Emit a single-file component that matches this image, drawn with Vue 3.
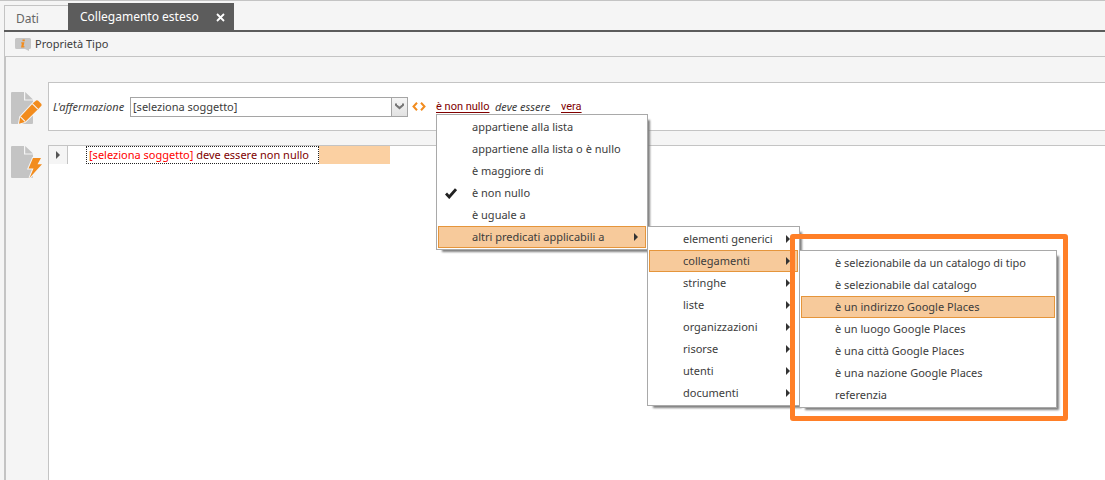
<script setup>
const predicates = [
  { label: 'appartiene alla lista' },
  { label: 'appartiene alla lista o è nullo' },
  { label: 'è maggiore di' },
  { label: 'è non nullo', checked: true },
  { label: 'è uguale a' },
]
const categories = ['elementi generici', 'collegamenti', 'stringhe', 'liste', 'organizzazioni', 'risorse', 'utenti', 'documenti']
const links = [
  'è selezionabile da un catalogo di tipo',
  'è selezionabile dal catalogo',
  'è un indirizzo Google Places',
  'è un luogo Google Places',
  'è una città Google Places',
  'è una nazione Google Places',
  'referenzia',
]
const openCategory = 'collegamenti'
const activeLink = 'è un indirizzo Google Places'
</script>

<template>
  <div class="app">
    <nav class="tabs">
      <button class="tab" type="button">Dati</button>
      <div class="tab active">
        <button class="tab-name" type="button">Collegamento esteso</button>
        <button class="close" type="button" aria-label="Chiudi">
          <svg width="9" height="9" viewBox="0 0 9 9"><path d="M1 1l7 7M8 1l-7 7" stroke="#fff" stroke-width="1.800" /></svg>
        </button>
      </div>
    </nav>

    <main class="page">
      <div class="toolbar">
        <button class="tool" type="button">
          <svg width="16" height="13" viewBox="0 0 16 13">
            <path d="M1.500 0h13A1.500 1.500 0 0 1 16 1.500v8a1.500 1.500 0 0 1-1.500 1.500H14v2l-4-2H1.500A1.500 1.500 0 0 1 0 9.500v-8A1.500 1.500 0 0 1 1.500 0z" fill="#c6c6c6" />
            <path d="M7.600 1.500h2.200v1.800H7.400zM6.300 4.300h3.100l-.9 4h1l-.2 1.300H6l.9-4h-.8z" fill="#f28c1e" />
          </svg>
          Proprietà Tipo
        </button>
      </div>

      <div class="content">
        <section class="row">
          <svg class="doc" width="32" height="34" viewBox="0 0 32 34">
            <path d="M1 1h12v8.500h9V32a1 1 0 0 1-1 1H1a1 1 0 0 1-1-1V2a1 1 0 0 1 1-1zM14.200 1L22 8.500h-7.800z" fill="#c4c4c4" />
            <g fill="#f28c1e" stroke="#f5f5f5" stroke-width="2" paint-order="stroke">
              <path d="M22.700 11.500l2.500-2q1-.5 2 .3l3 3q.8 1 .2 2l-2.400 2.400L14 30.900 8 32.800l1.200-6.900z" />
              <path d="M21.300 12.700l5.500 5.500M9.300 25.700l5 5" stroke-width="1.100" />
            </g>
          </svg>
          <div class="panel statement">
            <label class="lead" for="subject">L'affermazione</label>
            <div class="picker">
              <select id="subject"><option>[seleziona soggetto]</option></select>
              <span class="caret">
                <svg width="9" height="7" viewBox="0 0 9 7"><path d="M1 0.500v1.600l3.500 3 3.500-3V.5" fill="none" stroke="#757575" stroke-width="2" /></svg>
              </span>
            </div>
            <svg class="code" width="14" height="9" viewBox="0 0 14 9"><path d="M5 .7L1.500 4.500 5 8.300M9 .7l3.500 3.800L9 8.300" fill="none" stroke="#f28c1e" stroke-width="2" /></svg>
            <div class="predicate">
              <button class="term" type="button">è non nullo</button>
              <ul class="menu main">
                <li v-for="p in predicates" :key="p.label">
                  <button class="item" type="button">
                    <svg v-if="p.checked" class="check" width="12" height="11" viewBox="0 0 12 11"><path d="M1 5.500l3.200 3.500L11 1.200" fill="none" stroke="#222" stroke-width="2.800" /></svg>
                    {{ p.label }}
                  </button>
                </li>
                <li>
                  <button class="item on" type="button">altri predicati applicabili a<span class="arrow"></span></button>
                  <ul class="menu sub categories">
                    <li v-for="c in categories" :key="c">
                      <button class="item" :class="{ on: c === openCategory }" type="button">{{ c }}<span class="arrow"></span></button>
                      <div v-if="c === openCategory" class="sub framed">
                        <ul class="menu links">
                          <li v-for="l in links" :key="l">
                            <button class="item" :class="{ on: l === activeLink }" type="button">{{ l }}</button>
                          </li>
                        </ul>
                      </div>
                    </li>
                  </ul>
                </li>
              </ul>
            </div>
            <em class="verb">deve essere</em>
            <button class="term" type="button">vera</button>
          </div>
        </section>

        <section class="row rules">
          <svg class="doc" width="32" height="34" viewBox="0 0 32 34">
            <path d="M1 1h12v8.500h9V32a1 1 0 0 1-1 1H1a1 1 0 0 1-1-1V2a1 1 0 0 1 1-1zM14.200 1L22 8.500h-7.800z" fill="#c4c4c4" />
            <path d="M22 13h8l-3.500 6.300H31L18.500 33l4-9.500h-5z" fill="#f28c1e" stroke="#f5f5f5" stroke-width="2" paint-order="stroke" />
          </svg>
          <div class="panel list">
            <div class="rule">
              <button class="expand" type="button" aria-label="Espandi"><span class="arrow"></span></button>
              <p class="sentence"><span>[seleziona soggetto]</span> deve essere non nullo</p>
              <i class="swatch"></i>
            </div>
          </div>
        </section>
      </div>
    </main>
  </div>
</template>

<style>
body {
  background: #f5f5f5;
}
</style>

<style scoped>
.app {
  display: flex;
  flex-direction: column;
  height: 100vh;
  overflow: hidden;
  box-sizing: border-box;
  border-top: 1px solid #c4c4c4;
  background: #f5f5f5;
  color: #3c3c3c;
  font: 11px/16px "Noto Sans", "Open Sans", sans-serif;
}
button {
  border: 0;
  padding: 0;
  margin: 0;
  background: none;
  color: inherit;
  font: inherit;
  text-align: left;
}
svg {
  flex: none;
  display: block;
}
.tabs {
  display: flex;
  align-items: flex-end;
  margin-left: 4px;
  padding-top: 2px;
  border-bottom: 2px solid #5c5c5c;
}
.tab {
  height: 25px;
  width: 64px;
  box-sizing: border-box;
  padding: 1px 11px 0;
  border: 1px solid #c4c4c4;
  border-width: 1px 0 0 1px;
  color: #666;
  font-size: 12px;
}
.tab.active {
  display: flex;
  align-items: center;
  justify-content: space-between;
  width: 166px;
  height: 27px;
  padding: 1px 9px 0 12px;
  border: 0;
  background: #5c5c5c;
  color: #fff;
}
.page {
  flex: 1;
  display: flex;
  flex-direction: column;
  margin-left: 4px;
  border-left: 1px solid #c4c4c4;
}
.toolbar {
  height: 24px;
  display: flex;
  align-items: center;
  padding-left: 10px;
  border-bottom: 1px solid #c4c4c4;
}
.tool {
  display: flex;
  align-items: center;
  gap: 4px;
}
.content {
  flex: 1;
  display: flex;
  flex-direction: column;
  gap: 14px;
  padding: 25px 0 0 5px;
  border-left: 1px solid #c4c4c4;
}
.row {
  display: flex;
}
.rules {
  flex: 1;
}
.doc {
  width: 32px;
  margin: 9px 5px 0 0;
}
.rules .doc {
  margin-top: 0;
}
.panel {
  flex: 1;
  box-sizing: border-box;
  border: 1px solid #c4c4c4;
  border-right: 0;
  background: #fff;
}
.statement {
  display: flex;
  align-items: center;
  height: 49px;
  padding-left: 4px;
}
.list {
  border-bottom: 0;
}
.lead {
  width: 77px;
  font-style: italic;
  white-space: nowrap;
}
.picker {
  display: flex;
  position: relative;
  width: 278px;
  height: 20px;
  box-sizing: border-box;
  border: 1px solid #a5a5a5;
}
.picker select {
  appearance: none;
  width: 100%;
  margin: 0;
  padding: 0 20px 0 2px;
  border: 0;
  border-radius: 0;
  background: #fff;
  color: #3c3c3c;
  font: inherit;
}
.caret {
  position: absolute;
  top: 0;
  right: 0;
  bottom: 0;
  width: 15px;
  display: grid;
  place-items: center;
  border-left: 1px solid #a5a5a5;
  background: linear-gradient(#f5f5f5, #e2e2e2);
  pointer-events: none;
}
.code {
  margin: 0 10px 0 4px;
}
.predicate {
  position: relative;
  width: 59px;
}
.term {
  color: #800000;
  font-family: Roboto, "Noto Sans", sans-serif;
  text-decoration: underline;
  text-underline-offset: 2px;
  white-space: nowrap;
}
.verb {
  width: 66px;
  white-space: nowrap;
}
.menu {
  margin: 0;
  padding: 1px;
  list-style: none;
  box-sizing: border-box;
  border: 1px solid #a9a9a9;
  background: #fff;
  box-shadow: 4px 4px 2px -2px #808080;
}
.main {
  position: absolute;
  z-index: 2;
  top: calc(100% - 1px);
  left: 0;
  width: 212px;
}
.menu li {
  position: relative;
}
.sub {
  position: absolute;
  z-index: 3;
  top: 0;
  left: calc(100% + 1px);
}
.categories {
  width: 153px;
}
.links {
  width: 258px;
}
.framed::after {
  content: "";
  position: absolute;
  inset: -16px -11px -13px -9px;
  border: 5px solid #ff7f27;
  border-radius: 3px;
  pointer-events: none;
}
.item {
  position: relative;
  display: flex;
  align-items: center;
  justify-content: space-between;
  width: 100%;
  height: 22px;
  box-sizing: border-box;
  padding: 0 7px 0 33px;
  border: 1px solid transparent;
  white-space: nowrap;
}
.item.on {
  border-color: #e5953b;
  background: #f7ca9b;
}
.check {
  position: absolute;
  left: 6px;
  top: 5px;
}
.arrow {
  border: 4px solid transparent;
  border-left-color: #333;
  border-right: 0;
}
.rule {
  display: flex;
  height: 18px;
}
.expand {
  display: grid;
  place-items: center;
  width: 19px;
  border-right: 1px solid #c4c4c4;
  background: #f5f5f5;
}
.expand .arrow {
  border-left-color: #555;
}
.sentence {
  width: 233px;
  box-sizing: border-box;
  margin: 0 0 0 18px;
  padding-left: 2px;
  border: 1px dotted #222;
  color: #800000;
  white-space: nowrap;
}
.sentence span {
  color: #f00;
}
.swatch {
  width: 71px;
  background: #fbd0a2;
}
</style>
